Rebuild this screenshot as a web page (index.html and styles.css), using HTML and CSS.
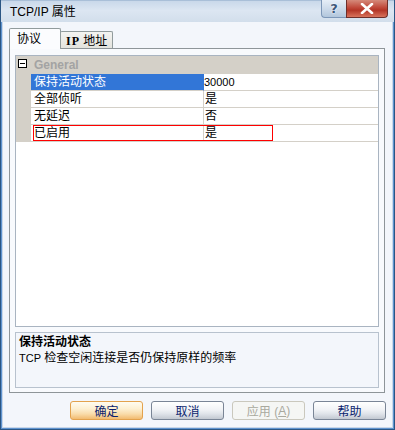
FILE: index.html
```html
<!DOCTYPE html>
<html lang="zh-CN">
<head>
<meta charset="utf-8">
<title>TCP/IP 属性</title>
<link rel="stylesheet" href="styles.css">
</head>
<body>
<div class="window">
  <div class="titlebar">
    <span class="title">TCP/IP 属性</span>
    <div class="caption-buttons">
      <div class="cap help">?</div>
      <div class="cap close">
        <svg width="14" height="11" viewBox="0 0 14 11"><path d="M2 1 L12 10 M12 1 L2 10" stroke="#ffffff" stroke-width="2.6" stroke-linecap="round"/></svg>
      </div>
    </div>
  </div>
  <div class="client">
    <div class="tabs">
      <div class="tab active">协议</div>
      <div class="tab"><span class="tab-latin">IP</span> 地址</div>
    </div>
    <div class="panel">
      <div class="grid">
        <div class="group">
          <div class="gutter"><span class="toggle"></span></div>
          <div class="group-label">General</div>
        </div>
        <div class="row selected">
          <div class="gutter"></div>
          <div class="name">保持活动状态</div>
          <div class="value"><span class="num">30000</span></div>
        </div>
        <div class="row">
          <div class="gutter"></div>
          <div class="name">全部侦听</div>
          <div class="value">是</div>
        </div>
        <div class="row">
          <div class="gutter"></div>
          <div class="name">无延迟</div>
          <div class="value">否</div>
        </div>
        <div class="row">
          <div class="gutter"></div>
          <div class="name">已启用</div>
          <div class="value">是</div>
        </div>
        <div class="edit-focus"></div>
      </div>
      <div class="desc">
        <div class="desc-title">保持活动状态</div>
        <div class="desc-text"><span class="latin">TCP</span> 检查空闲连接是否仍保持原样的频率</div>
      </div>
    </div>
    <div class="buttons">
      <div class="btn default">确定</div>
      <div class="btn">取消</div>
      <div class="btn disabled">应用 (<u>A</u>)</div>
      <div class="btn">帮助</div>
    </div>
  </div>
</div>
</body>
</html>
```

FILE: styles.css
```css
html, body {
  margin: 0;
  padding: 0;
  background: #ffffff;
}

body {
  font-family: "Liberation Sans", "Noto Sans CJK SC", sans-serif;
  font-size: 12px;
  color: #000000;
}

.window {
  width: 395px;
  height: 430px;
  box-sizing: border-box;
  border: 1px solid #2b5684;
  border-top: none;
  background: #f3f6fb;
  box-shadow: inset 1px 0 #5f93cf, inset -1px 0 #5f93cf, inset 0 -1px #5f93cf,
              inset 2px 0 #c9d7e8, inset -2px 0 #c9d7e8, inset 0 -2px #c9d7e8;
  display: flex;
  flex-direction: column;
}

.titlebar {
  height: 22px;
  flex: none;
  display: flex;
  align-items: flex-start;
  justify-content: space-between;
  padding: 0 6px 0 9px;
  background: linear-gradient(#c9d8ea, #dce6f2 45%, #d2deeb);
  border-top: 1px solid #a9bfd8;
  box-sizing: border-box;
}

.title {
  line-height: 22px;
  font-size: 12px;
  color: #000000;
}

.caption-buttons {
  display: flex;
  margin-top: -1px;
}

.cap {
  height: 18px;
  box-sizing: border-box;
  display: flex;
  align-items: center;
  justify-content: center;
}

.help {
  width: 25px;
  border: 1px solid #7d97b8;
  border-top: none;
  border-right: none;
  border-bottom-left-radius: 4px;
  background: linear-gradient(#e6eef7, #cddbeb 50%, #b2c6dc);
  color: #3d5779;
  font-family: "DejaVu Sans", sans-serif;
  font-weight: bold;
  font-size: 13px;
  text-shadow: 0 0 2px #ffffff, 0 0 1px #ffffff;
}

.close {
  width: 42px;
  border: 1px solid #6e2f2a;
  border-top: none;
  border-bottom-right-radius: 4px;
  background: linear-gradient(#d58a7b, #c0483a 45%, #b33526 60%, #d8735c);
}

.client {
  flex: 1;
  display: flex;
  flex-direction: column;
  padding: 6px 9px 0 8px;
}

.tabs {
  display: flex;
  align-items: flex-end;
  height: 20px;
}

.tab {
  box-sizing: border-box;
  width: 53px;
  height: 17px;
  margin-left: -1px;
  padding: 1px 0 0 5px;
  line-height: 16px;
  border: 1px solid #919b9c;
  border-bottom: none;
  border-radius: 2px 2px 0 0;
  background: linear-gradient(#f4f4f1, #e3e3de);
  white-space: nowrap;
}

.tab.active {
  width: 52px;
  height: 21px;
  margin-left: 0;
  margin-bottom: -1px;
  padding: 2px 0 0 7px;
  background: #fbfcfe;
  position: relative;
  z-index: 1;
}

.tab-latin {
  font-family: "Liberation Serif", serif;
  font-weight: bold;
  font-size: 12px;
  letter-spacing: 1px;
}

.panel {
  height: 345px;
  box-sizing: border-box;
  border: 1px solid #8e9599;
  background: #f8fafd;
  padding: 6px 5px 4px 5px;
  display: flex;
  flex-direction: column;
  gap: 5px;
}

.grid {
  position: relative;
  height: 272px;
  box-sizing: border-box;
  border: 1px solid #a9b4c1;
  background: #ffffff;
}

.group {
  display: flex;
  height: 18px;
  background: #d4d0c8;
}

.gutter {
  width: 15px;
  flex: none;
  background: #d4d0c8;
}

.group .gutter {
  padding: 3px 0 0 2px;
  box-sizing: border-box;
}

.toggle {
  display: block;
  position: relative;
  width: 9px;
  height: 9px;
  box-sizing: border-box;
  border: 1px solid #000000;
  background: #ffffff;
}

.toggle::after {
  content: "";
  position: absolute;
  left: 1px;
  top: 3px;
  width: 5px;
  height: 1px;
  background: #000000;
}

.group-label {
  padding-left: 3px;
  line-height: 18px;
  font-weight: bold;
  font-size: 12px;
  color: #a3a3a3;
}

.row {
  display: flex;
  height: 17px;
}

.name,
.value {
  height: 17px;
  box-sizing: border-box;
  line-height: 16px;
  border-bottom: 1px solid #d4d0c8;
  white-space: nowrap;
}

.name {
  width: 173px;
  flex: none;
  padding-left: 3px;
  border-right: 1px solid #d4d0c8;
}

.value {
  flex: 1;
  padding-left: 1px;
}

.row.selected .name {
  background: #3276d7;
  border-right-color: #3276d7;
  color: #ffffff;
}

.row.selected .value {
  padding-left: 0;
}

.num {
  font-size: 11px;
}

.edit-focus {
  position: absolute;
  left: 17px;
  top: 69px;
  width: 240px;
  height: 16px;
  box-sizing: border-box;
  border: 1px solid #ff0000;
}

.desc {
  height: 56px;
  box-sizing: border-box;
  border: 1px solid #b8c2ce;
  background: #f3f6fb;
  padding: 1px 0 0 3px;
  line-height: 16px;
}

.desc-title {
  font-weight: bold;
}

.latin {
  font-size: 11px;
}

.buttons {
  display: flex;
  justify-content: flex-end;
  gap: 8px;
  margin-top: 8px;
  margin-right: -1px;
}

.btn {
  width: 73px;
  height: 19px;
  box-sizing: border-box;
  border: 1px solid #7a8596;
  border-radius: 3px;
  background: linear-gradient(#ffffff, #f1f3f6 45%, #dfe3e9 70%, #c2c8d1);
  color: #0c1f6e;
  display: flex;
  align-items: center;
  justify-content: center;
  font-size: 12px;
  white-space: pre;
}

.btn.default {
  border-color: #e3a24d;
  background: linear-gradient(#fffcf1, #fdf0d2 40%, #f9dcaa 70%, #f2bb70);
}

.btn.disabled {
  border-color: #cac8bd;
  background: #f5f6f4;
  color: #a9a99e;
}
```
